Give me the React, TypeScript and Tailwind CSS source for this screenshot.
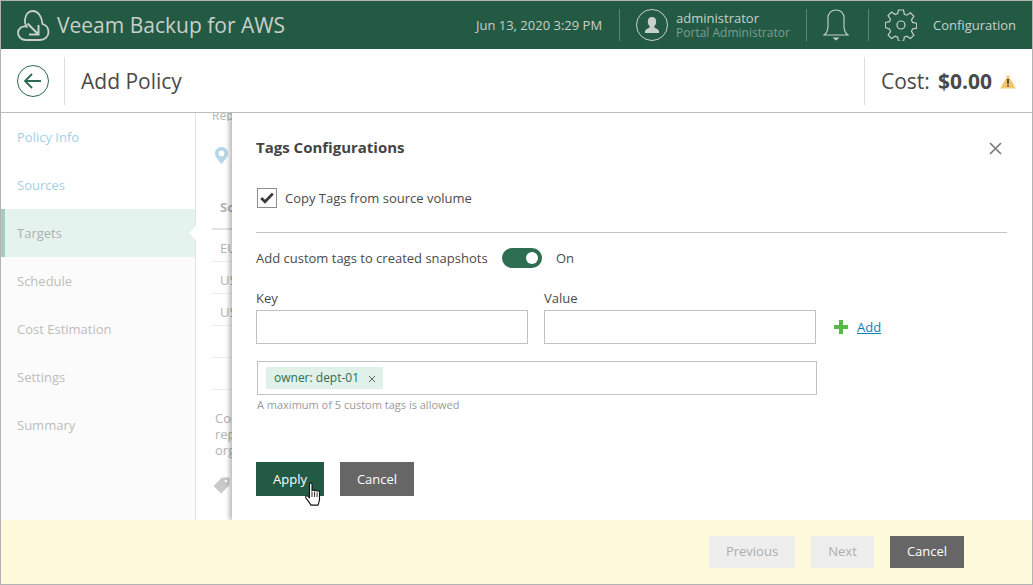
const steps = [
  { label: "Policy Info", tone: "done" },
  { label: "Sources", tone: "done" },
  { label: "Targets", tone: "active" },
  { label: "Schedule", tone: "todo" },
  { label: "Cost Estimation", tone: "todo" },
  { label: "Settings", tone: "todo" },
  { label: "Summary", tone: "todo" },
];

function CloudLogo() {
  return (
    <svg width="33" height="33" viewBox="0 0 33 33" fill="none" stroke="#c9d0cc" strokeWidth="1.8">
      <path d="M9 31h14c5 0 8.500-3.500 8.500-8 0-4-2.500-7-6-8C25 7 20.500 2 16 2c-4 0-7.500 3-8 8.500C7.500 13 8 15 9.500 17.500 5 16.500 1 19.500 1 24c0 4 3.500 7 8 7z" />
      <path d="M10.500 14.500 21.500 25.500M21.500 16V25.500H12" strokeWidth="2" />
    </svg>
  );
}

function BackIcon() {
  return (
    <svg width="32" height="32" viewBox="0 0 32 32" fill="none" stroke="#2b6b50">
      <circle cx="16" cy="16" r="15.500" />
      <path d="M8 16h16M15 9l-7 7 7 7" strokeWidth="1.800" />
    </svg>
  );
}

function UserIcon() {
  return (
    <svg width="32" height="32" viewBox="0 0 32 32" fill="none">
      <circle cx="16" cy="16" r="15.500" stroke="#c9d0cc" />
      <path
        d="M16 8c-2.800 0-4.200 2-4.200 4.500 0 2 .8 3.500 1.800 4.500v1.500c-1.500 1-4 1.500-4.600 3.500V24h14v-2c-.6-2-3.100-2.500-4.600-3.500V17c1-1 1.800-2.500 1.800-4.500C20.200 10 18.800 8 16 8z"
        fill="#c9d0cc"
      />
    </svg>
  );
}

function BellIcon() {
  return (
    <svg width="26" height="33" viewBox="0 0 26 33" fill="none" stroke="#c9d0cc" strokeWidth="1.100">
      <path d="M1 26c3-2 4-4 4-9V9c0-5 3.500-8 8-8s8 3 8 8v8c0 5 1 7 4 9z" />
      <path d="M9.500 28.500h7l-3.500 3z" fill="#c9d0cc" stroke="none" />
    </svg>
  );
}

function GearIcon() {
  return (
    <svg width="32" height="32" viewBox="0 0 32 32" fill="none" stroke="#c9d0cc" strokeWidth="1.200">
      <circle cx="16" cy="16" r="4" />
      <path d="M13.500 1h5l.8 4.200 2.500 1 3.600-2.400 3.500 3.500-2.400 3.600 1 2.500 4.200.8v5l-4.200.8-1 2.500 2.400 3.600-3.500 3.500-3.600-2.400-2.500 1-.8 4.200h-5l-.8-4.200-2.500-1-3.600 2.400-3.500-3.500 2.400-3.600-1-2.500L.3 18.500v-5l4.200-.8 1-2.500-2.400-3.600 3.500-3.500 3.600 2.400 2.500-1z" />
    </svg>
  );
}

function WarnIcon() {
  return (
    <svg width="16" height="15" viewBox="0 0 16 15">
      <path d="M8 0.500 15.800 14.500H0.200z" fill="#f3c56f" />
      <path d="M7.200 5h1.600v5H7.200zM7.200 11h1.600v1.600H7.200z" fill="#333" />
    </svg>
  );
}

function PinIcon() {
  return (
    <svg width="13" height="17" viewBox="0 0 13 17">
      <path
        fillRule="evenodd"
        d="M6.500 0C3 0 0 2.700 0 6.200 0 10.500 6.500 17 6.500 17S13 10.500 13 6.200C13 2.700 10 0 6.500 0zm0 3.600a2.800 2.800 0 1 1 0 5.600 2.800 2.800 0 0 1 0-5.600z"
        fill="#b5d6e8"
      />
    </svg>
  );
}

function TagIcon() {
  return (
    <svg width="17" height="17" viewBox="0 0 17 17">
      <path d="M9 .500h7.500V8L8 16.500.500 9z" fill="#c9c9c9" />
      <circle cx="13" cy="4" r="1.300" fill="#fff" />
    </svg>
  );
}

function CheckMark() {
  return (
    <svg width="14" height="12" viewBox="0 0 14 12" fill="none" stroke="#3b3b3b" strokeWidth="2.800">
      <path d="M1.200 6 5 9.800 12.800 1.600" />
    </svg>
  );
}

function CloseIcon() {
  return (
    <svg width="13" height="13" viewBox="0 0 13 13" fill="none" stroke="#777" strokeWidth="1.600">
      <path d="M1 1l11 11M12 1 1 12" />
    </svg>
  );
}

function PlusIcon() {
  return (
    <svg width="14" height="14" viewBox="0 0 14 14" fill="#57b947">
      <path d="M5 0h4v5h5v4H9v5H5V9H0V5h5z" />
    </svg>
  );
}

function ChipClose() {
  return (
    <svg width="8" height="8" viewBox="0 0 8 8" fill="none" stroke="#666" strokeWidth="1">
      <path d="M1 1l6 6M7 1 1 7" />
    </svg>
  );
}

function HandCursor() {
  return (
    <svg width="18" height="26" viewBox="0 0 18 26" className="absolute left-[48px] top-[20px]">
      <path
        d="M5.500 2c0-1.500 2.500-1.500 2.500 0v7c.3-1.300 2.500-1.300 2.600 0 .3-1 2.400-1 2.500.3.400-.8 2.400-.6 2.400.8v7c0 3-.8 4-1.500 6H7c-1.500-2.500-3-4.500-5-7-1.200-1.600.6-3 2-1.800l1.500 1.500z"
        fill="#fff"
        stroke="#111"
        strokeWidth="1.100"
        strokeLinejoin="round"
      />
      <path d="M8 10v5M10.600 10v5M13.100 10.500V15" stroke="#111" strokeWidth="0.900" />
    </svg>
  );
}

function BackgroundColumn() {
  return (
    <div className="w-full pl-[16px] text-[13px] text-[#b4b4b4]">
      <div className="h-[8px] overflow-hidden text-[12px] leading-[6px]">Replica</div>
      <div className="pl-[3px] pt-[26px]">
        <PinIcon />
      </div>
      <div className="mt-[35px] h-[31px] border-b-2 border-[#e3e3e3] pl-[8px] text-[13px] font-bold leading-[16px]">Source</div>
      {["EU", "US", "US", "", ""].map((row, i) => (
        <div key={i} className="h-[32px] border-b border-[#ececec] pl-[8px] text-[13px] leading-[36px]">
          {row}
        </div>
      ))}
      <div className="pl-[3px] pt-[20px] text-[13px] leading-[16px]">
        <div>Copy</div>
        <div>replica</div>
        <div>org</div>
      </div>
      <div className="pl-[1px] pt-[19px]">
        <TagIcon />
      </div>
    </div>
  );
}

function TagsDrawer() {
  return (
    <div className="absolute bottom-0 left-[36px] right-0 top-0 bg-white pl-[24px] pr-[25px] shadow-[-3px_0_4px_rgba(0,0,0,0.25)]">
      <div className="flex items-center justify-between pt-[24px]">
        <h2 className="text-[15px] font-bold leading-[20px] text-[#444]">Tags Configurations</h2>
        <span className="mr-[5px] mt-[3px] flex">
          <CloseIcon />
        </span>
      </div>
      <div className="mt-[31px] flex h-[20px] items-center gap-[8px] pl-[1px]">
        <span className="flex h-[20px] w-[20px] items-center justify-center border border-[#8c8c8c]">
          <CheckMark />
        </span>
        <span className="text-[13px] leading-[22px] text-[#4a4a4a]">Copy Tags from source volume</span>
      </div>
      <div className="mt-[24px] border-t border-[#c4c4c4]" />
      <div className="mt-[15px] flex h-[20px] items-center text-[13px] leading-[22px] text-[#4a4a4a]">
        <span className="w-[246px]">Add custom tags to created snapshots</span>
        <span className="relative h-[20px] w-[40px] rounded-full bg-[#2d6e52]">
          <span className="absolute left-[24px] top-[4px] h-[12px] w-[12px] rounded-full bg-white" />
        </span>
        <span className="ml-[14px]">On</span>
      </div>
      <div className="mt-[21px] flex items-end">
        <label className="w-[272px] text-[13px] text-[#4a4a4a]">
          <span className="block h-[21px] leading-[18px]">Key</span>
          <input className="block h-[34px] w-full border border-[#c2c2c2] bg-white" />
        </label>
        <label className="ml-[16px] w-[272px] text-[13px] text-[#4a4a4a]">
          <span className="block h-[21px] leading-[18px]">Value</span>
          <input className="block h-[34px] w-full border border-[#c2c2c2] bg-white" />
        </label>
        <a className="ml-[18px] flex h-[34px] items-center text-[13px] text-[#0f7fb8]">
          <PlusIcon />
          <span className="ml-[9px] pt-[2px] underline">Add</span>
        </a>
      </div>
      <div className="ml-[1px] mt-[17px] flex h-[34px] w-[560px] items-center border border-[#c2c2c2] pl-[8px]">
        <span className="flex h-[22px] w-[117px] items-center bg-[#e0f1ea] pl-[8px] text-[12px] text-[#2d6e52]">
          owner: dept-01
          <span className="ml-[9px] flex pt-[2px]">
            <ChipClose />
          </span>
        </span>
      </div>
      <p className="ml-[1px] mt-[2px] text-[11px] leading-[15px] text-[#9a9a9a]">A maximum of 5 custom tags is allowed</p>
      <div className="mt-[50px] flex gap-[16px]">
        <div className="relative">
          <button className="h-[34px] w-[68px] bg-[#235a43] pt-[1px] text-[13px] text-white">Apply</button>
          <HandCursor />
        </div>
        <button className="h-[34px] w-[74px] bg-[#666666] pt-[1px] text-[13px] text-white">Cancel</button>
      </div>
    </div>
  );
}

export default function App() {
  return (
    <div className="flex h-[585px] w-[1033px] flex-col overflow-hidden border border-[#b3b3b3] bg-white font-['Open_Sans',sans-serif]">
      <header className="flex h-[48px] shrink-0 items-center bg-[#235a43] pl-[16px] text-[#c9d0cc]">
        <CloudLogo />
        <span className="ml-[7px] pt-[2px] text-[21px]">Veeam Backup for AWS</span>
        <span className="ml-auto pt-[2px] text-[13px]">Jun 13, 2020 3:29 PM</span>
        <span className="ml-[17px] mr-[16px] h-[32px] w-px bg-[#5d8472]" />
        <UserIcon />
        <div className="ml-[8px] w-[130px] leading-[14px]">
          <div className="text-[13px]">administrator</div>
          <div className="mt-[1px] text-[12px] text-[#7f9e8f]">Portal Administrator</div>
        </div>
        <span className="mr-[16px] h-[32px] w-px bg-[#5d8472]" />
        <BellIcon />
        <span className="ml-[19px] mr-[16px] h-[32px] w-px bg-[#5d8472]" />
        <GearIcon />
        <span className="mx-[16px] pt-[2px] text-[13px]">Configuration</span>
      </header>

      <div className="flex h-[64px] shrink-0 items-center border-b border-[#bdbdbd] pl-[16px]">
        <BackIcon />
        <span className="ml-[15px] h-[48px] w-px bg-[#dcdcdc]" />
        <h1 className="ml-[16px] pt-[2px] text-[21px] text-[#4a4a4a]">Add Policy</h1>
        <span className="ml-auto h-[48px] w-px bg-[#dcdcdc]" />
        <div className="flex w-[167px] items-center pl-[16px] text-[#4a4a4a]">
          <span className="pt-[2px] text-[21px]">Cost:</span>
          <span className="ml-[8px] pt-[2px] text-[21px] font-bold">$0.00</span>
          <span className="ml-[8px] flex pt-[2px]">
            <WarnIcon />
          </span>
        </div>
      </div>

      <div className="flex min-h-0 flex-1">
        <nav className="w-[195px] shrink-0 border-r border-[#e2e2e2] bg-[#fbfbfb]">
          {steps.map((s) => (
            <div
              key={s.label}
              className={
                s.tone === "done"
                  ? "flex h-[48px] items-center bg-white pl-[16px] pt-[2px] text-[13px] text-[#a3d0e8]"
                  : s.tone === "active"
                    ? "relative flex h-[48px] items-center border-l-4 border-[#a3cdb9] bg-[#e4f3ed] pl-[12px] pt-[2px] text-[13px] text-[#b0b0b0]"
                    : "flex h-[48px] items-center pl-[16px] pt-[2px] text-[13px] text-[#bdbdbd]"
              }
            >
              {s.label}
              {s.tone === "active" && (
                <span className="absolute right-[-1px] top-[17px] h-0 w-0 border-y-[7px] border-r-[7px] border-y-transparent border-r-white" />
              )}
            </div>
          ))}
        </nav>
        <main className="relative min-w-0 flex-1 overflow-hidden">
          <BackgroundColumn />
          <TagsDrawer />
        </main>
      </div>

      <footer className="flex h-[64px] shrink-0 items-center justify-end gap-[16px] bg-[#fef9db] pr-[68px] text-[13px]">
        <button className="h-[32px] w-[86px] bg-[#eeeeee] text-[#adadad]">Previous</button>
        <button className="h-[32px] w-[63px] bg-[#eeeeee] text-[#adadad]">Next</button>
        <button className="h-[32px] w-[74px] bg-[#666666] text-white">Cancel</button>
      </footer>
    </div>
  );
}
